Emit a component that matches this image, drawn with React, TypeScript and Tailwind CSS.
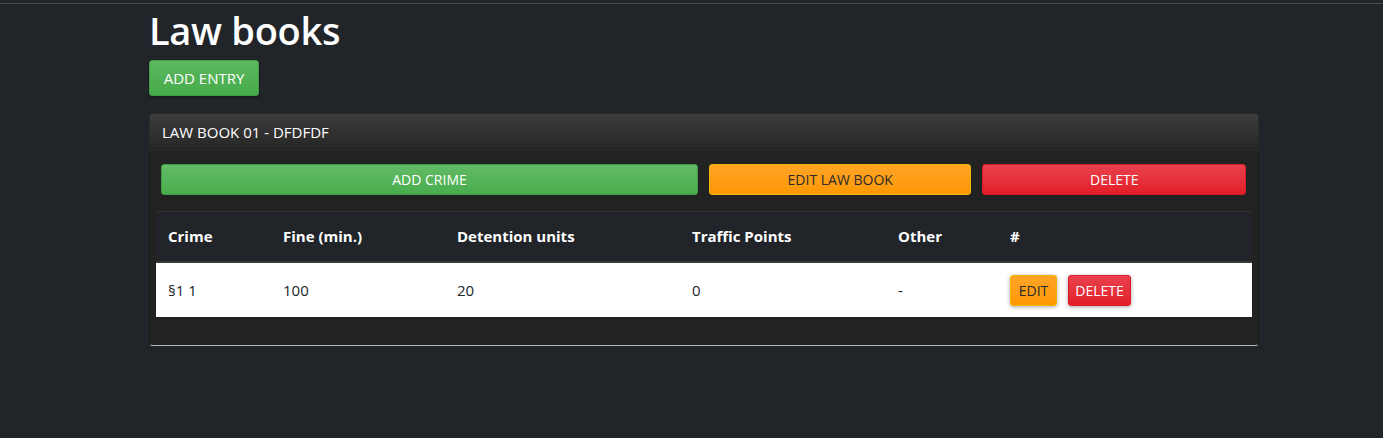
import React from 'react';

const crimes = [
  { crime: '§1 1', fine: '100', detention: '20', traffic: '0', other: '-' },
];

export default function App() {
  return (
    <div className="min-h-[438px] bg-[#212529] font-['Open_Sans',sans-serif] text-white">
      <div className="h-[3px] bg-[#212529]" />
      <div className="h-[1px] bg-[#4b4b4b]" />
      <div className="ml-[149px] w-[1110px]">
        <h1 className="mt-[2px] text-[38px] font-semibold leading-[48px] tracking-[-0.3px]">Law books</h1>
        <button className="mt-[6px] h-[36px] w-[110px] rounded-[3px] border border-[#3f9e43] bg-gradient-to-b from-[#5cb85f] to-[#46ab4a] text-[15px] text-white shadow-[0_1px_3px_rgba(0,0,0,0.4)]">
          ADD ENTRY
        </button>

        <div className="mt-[17px]">
          <div className="flex h-[38px] items-center rounded-t-[4px] border border-[#2c2c2c] bg-gradient-to-b from-[#3d3d3d] to-[#262626] px-[12px] text-[15px]">
            LAW BOOK 01 - DFDFDF
          </div>
          <div className="rounded-b-[4px] border border-t-0 border-[#1c1c1c] border-b-[#b5b5b5] bg-[#222222] px-[6px] pb-[28px] pt-[13px]">
            <div className="flex gap-[11px] pl-[5px] pr-[6px]">
              <button className="h-[31px] w-[538px] rounded-[3px] border border-[#3f9e43] bg-gradient-to-b from-[#63bb66] to-[#48ad4c] text-[14px] text-white">
                ADD CRIME
              </button>
              <button className="h-[31px] w-[263px] rounded-[3px] border border-[#f0b400] bg-gradient-to-b from-[#ffa424] to-[#ff9800] text-[14px] text-[#2a2a2a]">
                EDIT LAW BOOK
              </button>
              <button className="h-[31px] w-[264px] rounded-[3px] border border-[#d81d2a] bg-gradient-to-b from-[#e8404c] to-[#e31c28] text-[14px] text-white">
                DELETE
              </button>
            </div>
            <div className="mt-[16px] border-t border-[#333333]">
              <table className="w-full table-fixed border-collapse text-left text-[15px]">
                <thead>
                  <tr className="h-[50px] border-b-2 border-[#3a3a3a] bg-[#212529]">
                    <th className="w-[127px] pl-[12px] font-bold">Crime</th>
                    <th className="w-[174px] font-bold">Fine (min.)</th>
                    <th className="w-[235px] font-bold">Detention units</th>
                    <th className="w-[206px] font-bold">Traffic Points</th>
                    <th className="w-[112px] font-bold">Other</th>
                    <th className="font-bold">#</th>
                  </tr>
                </thead>
                <tbody>
                  {crimes.map((c, i) => (
                    <tr key={i} className="h-[55px] bg-white text-[#212529]">
                      <td className="pl-[12px]">{c.crime}</td>
                      <td>{c.fine}</td>
                      <td>{c.detention}</td>
                      <td>{c.traffic}</td>
                      <td>{c.other}</td>
                      <td>
                        <div className="flex gap-[11px] pl-[-1px]">
                          <button className="h-[31px] w-[47px] rounded-[3px] border border-[#f0b400] bg-gradient-to-b from-[#ffa424] to-[#ff9800] text-[14px] text-[#2a2a2a] shadow-[0_1px_4px_rgba(0,0,0,0.35)]">
                            EDIT
                          </button>
                          <button className="h-[31px] w-[63px] rounded-[3px] border border-[#d81d2a] bg-gradient-to-b from-[#e8404c] to-[#e31c28] text-[14px] text-white shadow-[0_1px_4px_rgba(0,0,0,0.35)]">
                            DELETE
                          </button>
                        </div>
                      </td>
                    </tr>
                  ))}
                </tbody>
              </table>
            </div>
          </div>
        </div>
      </div>
    </div>
  );
}
